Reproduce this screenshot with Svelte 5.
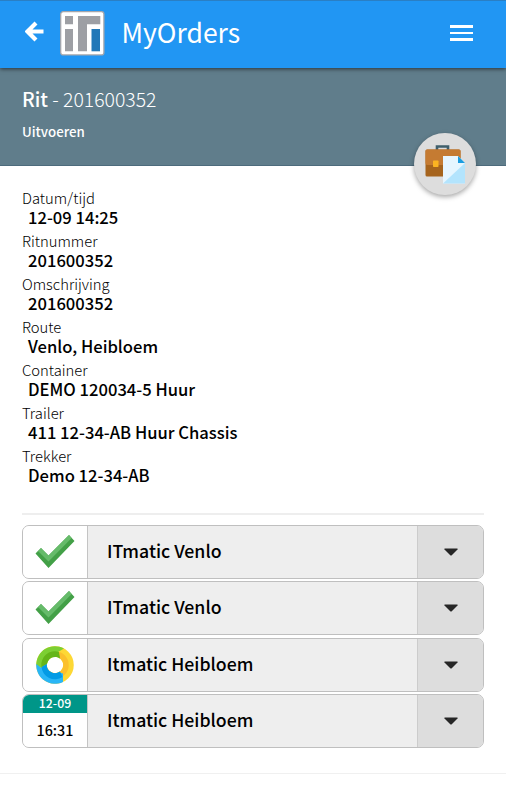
<script lang="ts">
	const fields = [
		{ label: 'Datum/tijd', value: '12-09 14:25' },
		{ label: 'Ritnummer', value: '201600352' },
		{ label: 'Omschrijving', value: '201600352' },
		{ label: 'Route', value: 'Venlo, Heibloem' },
		{ label: 'Container', value: 'DEMO 120034-5 Huur' },
		{ label: 'Trailer', value: '411 12-34-AB Huur Chassis' },
		{ label: 'Trekker', value: 'Demo 12-34-AB' }
	];

	const stops = [
		{ name: 'ITmatic Venlo', status: 'done' },
		{ name: 'ITmatic Venlo', status: 'done' },
		{ name: 'Itmatic Heibloem', status: 'busy' },
		{ name: 'Itmatic Heibloem', status: 'planned', date: '12-09', time: '16:31' }
	];
</script>

<div class="app">
	<header class="topbar">
		<button class="back" aria-label="Terug">
			<svg width="20" height="22" viewBox="0 0 20 22">
				<path d="M11 2 2.5 10.5 11 19M3 10.5H18.5" fill="none" stroke="#fff" stroke-width="4.2" />
			</svg>
		</button>
		<svg class="logo" width="45" height="45" viewBox="0 0 45 45">
			<rect x="0.7" y="0.7" width="43.2" height="43.2" rx="2.5" fill="#fff" stroke="#a5a6ab" stroke-width="1.3" />
			<path d="M5 5h8v8.3H5zM5 18h8v22.3H5zM18 5h22.3v8.3H27V40.3H18z" fill="#9d9fa4" />
			<path d="M31.5 18H40v22.3h-8.5z" fill="#2178b8" />
		</svg>
		<h1>MyOrders</h1>
		<button class="menu" aria-label="Menu">
			<span></span>
			<span></span>
			<span></span>
		</button>
	</header>

	<section class="hero">
		<h2><b>Rit</b> - 201600352</h2>
		<p>Uitvoeren</p>
		<button class="fab" aria-label="Documenten">
			<svg width="41" height="40" viewBox="0 0 41 40">
				<path d="M12 7V2.5h11V7" fill="none" stroke="#3f5f6b" stroke-width="2.6" />
				<rect x="0.5" y="5.5" width="35" height="27" rx="1.5" fill="#a6641d" />
				<path d="M2 5.5h32a1.5 1.5 0 0 1 1.5 1.5v12q0 2-2 2h-31q-2 0-2-2V7A1.5 1.5 0 0 1 2 5.5z" fill="#c57b32" />
				<rect x="8" y="16.5" width="5.5" height="6.5" rx="0.7" fill="#fbb321" />
				<path d="M18 12h15l7 7v20.5H18z" fill="#e6f6ff" />
				<path d="M40 19v20.5H18z" fill="#b3e4fd" />
				<path d="M33 12l7 7h-7z" fill="#1a9de0" />
			</svg>
		</button>
	</section>

	<main>
		<dl>
			{#each fields as field}
				<dt>{field.label}</dt>
				<dd>{field.value}</dd>
			{/each}
		</dl>

		<ul>
			{#each stops as stop}
				<li>
					<div class="status">
						{#if stop.status === 'done'}
							<svg width="40" height="34" viewBox="0 0 40 34">
								<path d="M0.5 18.5 6 13 13.5 20.5 34 0 39.5 6 13.5 33z" fill="#43a047" />
								<path d="M0.5 18.5 6 13 13.5 20.5 34 0 36.7 3 13.5 26.5 3.5 16.5z" fill="#66bb6a" />
							</svg>
						{:else if stop.status === 'busy'}
							<svg width="38" height="38" viewBox="0 0 38 38">
								<circle cx="19" cy="19" r="13.5" fill="none" stroke="#fdd835" stroke-width="10.5" />
								<circle cx="19" cy="19" r="11" fill="none" stroke="#fbc02d" stroke-width="5.5" />
								<path d="M28 2.5A18.75 18.75 0 0 0 .25 19L5.5 22 11 18A8.25 8.25 0 0 1 24 12l-2-6z" fill="#7ccf33" />
								<path d="M23 6A13.5 13.5 0 0 0 5.5 21l5.5-3a8.25 8.25 0 0 1 13-5.5z" fill="#64b519" />
								<path d="M.25 18A18.75 18.75 0 0 0 27 36V27.5L23 26.2A8.25 8.25 0 0 1 10.8 18L5.5 22z" fill="#29b6f6" />
								<path d="M5.5 21A13.5 13.5 0 0 0 26.5 31L24 25.5A8.25 8.25 0 0 1 10.8 18z" fill="#039be5" />
							</svg>
						{:else}
							<span class="date">{stop.date}</span>
							<span class="time">{stop.time}</span>
						{/if}
					</div>
					<div class="name">{stop.name}</div>
					<button class="toggle" aria-label="Details">
						<svg width="14" height="8" viewBox="0 0 14 8">
							<path d="M0.5 0.5h13v1L7.5 7.5h-1l-6-6z" fill="#262626" />
						</svg>
					</button>
				</li>
			{/each}
		</ul>
	</main>
	<footer></footer>
</div>

<style>
	:global(body) {
		background: #fff;
	}

	.app {
		display: flex;
		flex-direction: column;
		height: 800px;
		overflow: hidden;
		font-family: 'Noto Sans CJK SC', 'Noto Sans', sans-serif;
		color: #000;
	}

	.app * {
		box-sizing: border-box;
	}

	button {
		border: 0;
		padding: 0;
		background: none;
		cursor: pointer;
	}

	svg {
		display: block;
		flex: none;
	}

	.topbar {
		position: relative;
		z-index: 1;
		display: flex;
		align-items: center;
		height: 68px;
		flex: none;
		padding: 0 33px 0 25px;
		background: #2196f3;
		border-top: 1px solid #2a7fc4;
		box-shadow: 0 1px 4px rgba(0, 0, 0, 0.6);
	}

	.back {
		margin-bottom: 5px;
	}

	.logo {
		margin: 0 0 2px 15px;
	}

	h1 {
		margin: 0 0 5px 16.5px;
		font-size: 26.5px;
		font-weight: 400;
		line-height: 36px;
		color: #fff;
	}

	.menu {
		display: flex;
		flex-direction: column;
		gap: 4px;
		width: 23px;
		margin: 0 0 3px auto;
	}

	.menu span {
		height: 2.4px;
		background: #fff;
	}

	.hero {
		position: relative;
		height: 98px;
		flex: none;
		padding: 17px 22px 0;
		background: #607d8b;
		border-bottom: 1px solid #4d6b7c;
		color: #fff;
	}

	h2 {
		margin: 0;
		font-size: 19.4px;
		font-weight: 300;
		line-height: 28px;
	}

	h2 b {
		font-weight: 500;
	}

	.hero p {
		margin: 9px 0 0;
		font-size: 13.3px;
		font-weight: 500;
		line-height: 20px;
	}

	.fab {
		position: absolute;
		top: 65px;
		right: 30px;
		display: flex;
		align-items: center;
		justify-content: center;
		width: 62px;
		height: 62px;
		border-radius: 50%;
		background: #ddd;
		box-shadow: 0 2px 5px rgba(0, 0, 0, 0.35);
	}

	main {
		padding: 23px 22px 0;
	}

	dl {
		height: 326px;
		margin: 0;
		border-bottom: 2px solid #eee;
	}

	dt {
		padding-bottom: 2px;
		font-size: 14.8px;
		font-weight: 300;
		line-height: 17px;
	}

	dd {
		margin: 0 0 6px 6px;
		font-size: 16.6px;
		font-weight: 500;
		line-height: 18px;
	}

	ul {
		display: flex;
		flex-direction: column;
		gap: 2.6px;
		margin: 9.6px 0 0;
		padding: 0;
		list-style: none;
	}

	li {
		display: flex;
		height: 54px;
		border: 1px solid #bfbfbf;
		border-radius: 7px;
		overflow: hidden;
		background: #eee;
	}

	.status {
		display: flex;
		flex-direction: column;
		align-items: center;
		justify-content: center;
		width: 64px;
		background: #fff;
	}

	.date {
		width: 100%;
		height: 18px;
		background: #009688;
		color: #fff;
		font-size: 12.3px;
		font-weight: 500;
		line-height: 16px;
		text-align: center;
	}

	.time {
		flex: 1;
		font-size: 14.3px;
		font-weight: 500;
		line-height: 33px;
	}

	.name {
		flex: 1;
		padding-left: 19px;
		border-left: 1px solid #c4c4c4;
		font-size: 17.7px;
		font-weight: 500;
		line-height: 49px;
	}

	.toggle {
		display: flex;
		align-items: center;
		justify-content: center;
		width: 66px;
		background: #ddd;
		border-left: 1px solid #ccc;
	}

	footer {
		margin-top: 25px;
		border-top: 1px solid #f0f0f0;
	}
</style>
